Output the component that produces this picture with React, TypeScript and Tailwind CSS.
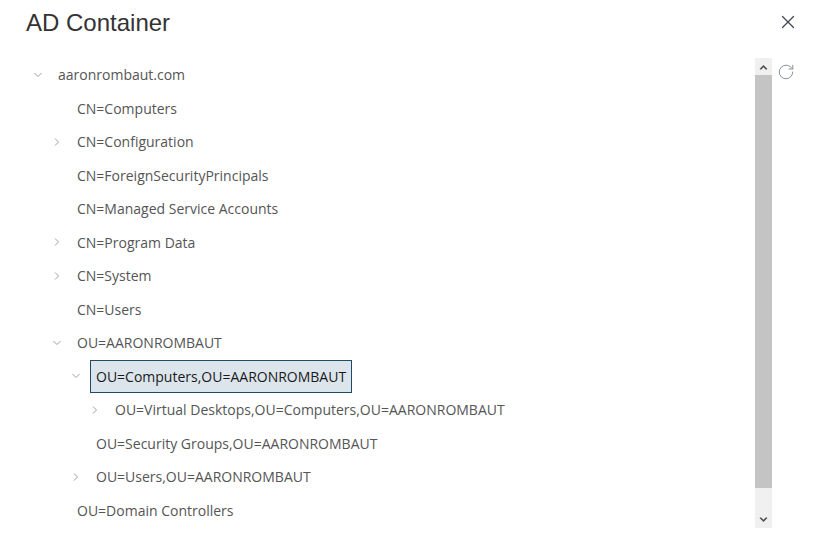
import { X, RotateCw } from "lucide-react";

type Node = {
  label: string;
  level: number;
  chevron?: "down" | "right";
  selected?: boolean;
};

const nodes: Node[] = [
  { label: "aaronrombaut.com", level: 0, chevron: "down" },
  { label: "CN=Computers", level: 1 },
  { label: "CN=Configuration", level: 1, chevron: "right" },
  { label: "CN=ForeignSecurityPrincipals", level: 1 },
  { label: "CN=Managed Service Accounts", level: 1 },
  { label: "CN=Program Data", level: 1, chevron: "right" },
  { label: "CN=System", level: 1, chevron: "right" },
  { label: "CN=Users", level: 1 },
  { label: "OU=AARONROMBAUT", level: 1, chevron: "down" },
  { label: "OU=Computers,OU=AARONROMBAUT", level: 2, chevron: "down", selected: true },
  { label: "OU=Virtual Desktops,OU=Computers,OU=AARONROMBAUT", level: 3, chevron: "right" },
  { label: "OU=Security Groups,OU=AARONROMBAUT", level: 2 },
  { label: "OU=Users,OU=AARONROMBAUT", level: 2, chevron: "right" },
  { label: "OU=Domain Controllers", level: 1 },
];

const Chevron = ({ dir }: { dir?: "down" | "right" }) => {
  if (!dir) return null;
  return (
    <svg width="10" height="10" viewBox="0 0 10 10" fill="none" stroke="#a0a0a0" strokeWidth="1">
      {dir === "down" ? <polyline points="1.5,3 5,6.5 8.5,3" /> : <polyline points="3,1.5 6.5,5 3,8.5" />}
    </svg>
  );
};

const TreeRow = ({ node }: { node: Node }) => (
  <div className="flex items-center h-[33.5px]" style={{ paddingLeft: node.level * 19 }}>
    <div className="w-5 flex justify-center items-center">
      <Chevron dir={node.chevron} />
    </div>
    <div
      className={
        "ml-1 h-[33px] flex items-center px-[5px] border whitespace-nowrap " +
        (node.selected
          ? "bg-[#dce5ec] border-[#1e4c66] text-[#1a1a1a]"
          : "border-transparent text-[#555555]")
      }
    >
      {node.label}
    </div>
  </div>
);

const App = () => {
  return (
    <div className="w-[814px] h-[540px] bg-white overflow-hidden font-['Open_Sans',sans-serif]">
      {/* Header */}
      <div className="flex justify-between h-[58px]">
        <h1 className="pl-[26px] pt-[9px] text-[24px] leading-[28px] text-[#333333] font-['Liberation_Sans',Arial,sans-serif]">
          AD Container
        </h1>
        <button className="mr-[15px] mt-[11px] h-[22px] w-[22px] flex items-center justify-center text-[#3e4752]">
          <X size={22} strokeWidth={1.4} />
        </button>
      </div>

      {/* Body */}
      <div className="flex">
        <div className="flex-1 h-[470px] overflow-hidden pl-[28px] text-[14px]">
          {nodes.map((n, i) => (
            <TreeRow key={i} node={n} />
          ))}
        </div>

        {/* Scrollbar */}
        <div className="w-[17px] h-[470px] bg-[#f0f0f0] flex flex-col">
          <div className="h-[17px] flex items-center justify-center">
            <svg width="9" height="6" viewBox="0 0 9 6">
              <path d="M0.5 5 L4.5 1 L8.5 5 L7 5.8 L4.5 3.3 L2 5.8 Z" fill="#505050" />
            </svg>
          </div>
          <div className="h-[413px] bg-[#c4c4c4]" />
          <div className="flex-1" />
          <div className="h-[17px] flex items-center justify-center">
            <svg width="9" height="6" viewBox="0 0 9 6">
              <path d="M0.5 1 L4.5 5 L8.5 1 L7 0.2 L4.5 2.7 L2 0.2 Z" fill="#505050" />
            </svg>
          </div>
        </div>

        {/* Refresh */}
        <div className="w-[42px] pl-[5px] pt-[5px] text-[#7d848c]">
          <RotateCw size={18} strokeWidth={1.2} />
        </div>
      </div>
    </div>
  );
};

export default App;
